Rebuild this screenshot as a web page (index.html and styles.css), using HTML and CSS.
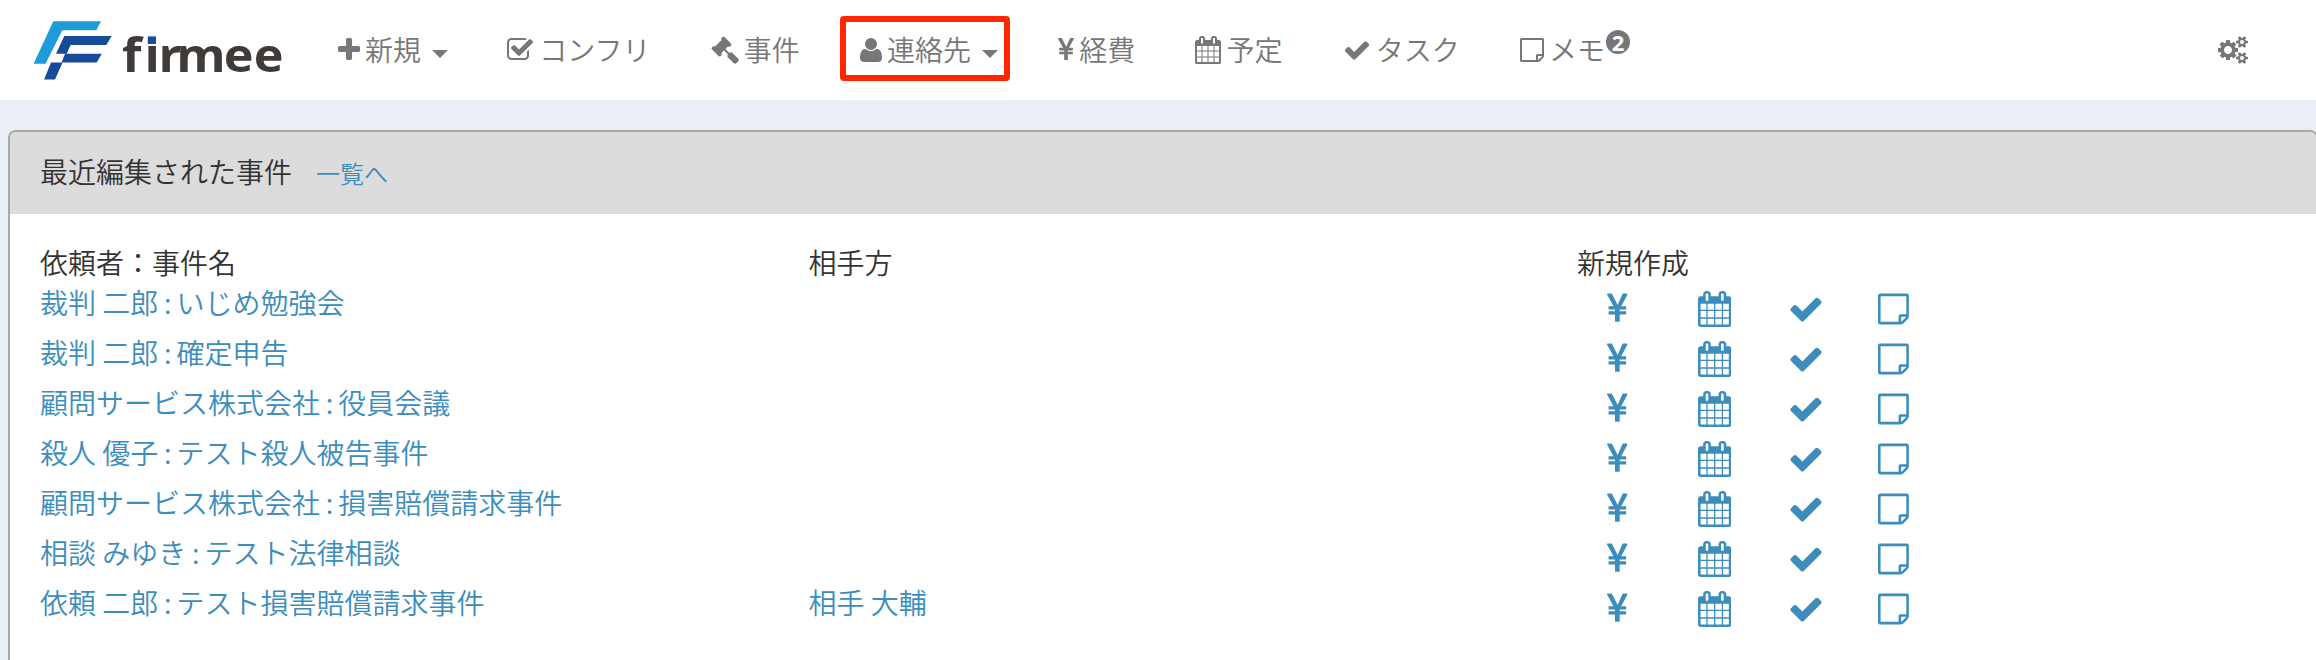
FILE: index.html
```html
<!DOCTYPE html>
<html lang="ja">
<head>
<meta charset="utf-8">
<title>firmee</title>
<link rel="stylesheet" href="styles.css">
</head>
<body>
<svg class="sprite" aria-hidden="true">
  <symbol id="plus" viewBox="192 0 1408 1792"><path d="M1600 736v192q0 40-28 68t-68 28h-416v416q0 40-28 68t-68 28h-192q-40 0-68-28t-28-68v-416h-416q-40 0-68-28t-28-68v-192q0-40 28-68t68-28h416v-416q0-40 28-68t68-28h192q40 0 68 28t28 68v416h416q40 0 68 28t28 68z"/></symbol>
  <symbol id="check-square" viewBox="64 0 1664 1792"><path d="M1472 930v318q0 119-84.5 203.5t-203.5 84.5h-832q-119 0-203.5-84.5t-84.5-203.5v-832q0-119 84.5-203.5t203.5-84.5h832q63 0 117 25 15 7 18 23 3 17-9 29l-49 49q-10 10-23 10-3 0-9-2-23-6-45-6h-832q-66 0-113 47t-47 113v832q0 66 47 113t113 47h832q66 0 113-47t47-113v-254q0-13 9-22l64-64q10-10 23-10 6 0 12 3 20 8 20 29zm231-489l-814 814q-24 24-57 24t-57-24l-430-430q-24-24-24-57t24-57l110-110q24-24 57-24t57 24l263 263 647-647q24-24 57-24t57 24l110 110q24 24 24 57t-24 57z"/></symbol>
  <symbol id="gavel" viewBox="0 0 1792 1792"><path d="M1771 1536q0 53-37 90l-107 108q-39 37-91 37-53 0-90-37l-363-364q-38-36-38-90 0-53 43-96l-256-256-126 126q-14 14-34 14t-34-14q2 2 12.5 12t12.5 13 10 11.5 10 13.5 6 13.5 5.5 16.5 1.5 18q0 38-28 68-3 3-16.5 18t-19 20.5-18.5 16.5-22 15.5-22 9-26 4.5q-40 0-68-28l-408-408q-28-28-28-68 0-13 4.5-26t9-22 15.5-22 16.5-18.5 20.5-19 18-16.5q30-28 68-28 10 0 18 1.5t16.5 5.5 13.5 6 13.5 10 11.5 10 13 12.5 12 12.5q-14-14-14-34t14-34l348-348q14-14 34-14t34 14q-2-2-12.5-12t-12.5-13-10-11.5-10-13.5-6-13.5-5.5-16.5-1.5-18q0-38 28-68 3-3 16.5-18t19-20.5 18.5-16.5 22-15.5 22-9 26-4.5q40 0 68 28l408 408q28 28 28 68 0 13-4.5 26t-9 22-15.5 22-16.5 18.5-20.5 19-18 16.5q-30 28-68 28-10 0-18-1.5t-16.5-5.5-13.5-6-13.5-10-11.5-10-13-12.5-12-12.5q14 14 14 34t-14 34l-126 126 256 256q43-43 96-43 52 0 91 37l363 363q37 39 37 91z"/></symbol>
  <symbol id="user" viewBox="192 0 1408 1792"><path d="M1600 1405q0 120-73 189.5t-194 69.5h-874q-121 0-194-69.5t-73-189.5q0-53 3.5-103.5t14-109 26.5-108.5 43-97.5 62-81 85.5-53.5 111.5-20q9 0 42 21.5t74.5 48 108 48 133.5 21.5 133.5-21.5 108-48 74.5-48 42-21.5q61 0 111.5 20t85.5 53.5 62 81 43 97.5 26.5 108.5 14 109 3.5 103.5zm-320-893q0 159-112.5 271.5t-271.5 112.5-271.5-112.5-112.5-271.5 112.5-271.5 271.5-112.5 271.5 112.5 112.5 271.5z"/></symbol>
  <symbol id="yen" viewBox="384 0 1027 1792"><path d="M985.5 1536h-172q-13 0-22.5-9t-9.5-23v-330h-288q-13 0-22.5-9t-9.5-23v-103q0-13 9.5-22.5t22.5-9.5h288v-85h-288q-13 0-22.5-9t-9.5-23v-104q0-13 9.5-22.5t22.5-9.5h214l-321-578q-8-16 0-32 10-16 28-16h194q19 0 29 18l215 425q19 38 56 125 10-24 30.5-68t27.5-61l191-420q8-19 29-19h191q17 0 27 16 9 14 1 31l-313 579h215q13 0 22.5 9.5t9.5 22.5v104q0 14-9.5 23t-22.5 9h-290v85h290q13 0 22.5 9.5t9.5 22.5v103q0 14-9.5 23t-22.5 9h-290v330q0 13-9.5 22.5t-22.5 9.5z"/></symbol>
  <symbol id="calendar" viewBox="64 0 1664 1792"><path d="M192 1664h288v-288h-288v288zm352 0h320v-288h-320v288zm-352-352h288v-320h-288v320zm352 0h320v-320h-320v320zm-352-384h288v-288h-288v288zm736 736h320v-288h-320v288zm-384-736h320v-288h-320v288zm768 736h288v-288h-288v288zm-384-352h320v-320h-320v320zm-352-864v-288q0-13-9.5-22.5t-22.5-9.5h-64q-13 0-22.5 9.5t-9.5 22.5v288q0 13 9.5 22.5t22.5 9.5h64q13 0 22.5-9.5t9.5-22.5zm736 864h288v-320h-288v320zm-384-384h320v-288h-320v288zm384 0h288v-288h-288v288zm32-480v-288q0-13-9.5-22.5t-22.5-9.5h-64q-13 0-22.5 9.5t-9.5 22.5v288q0 13 9.5 22.5t22.5 9.5h64q13 0 22.5-9.5t9.5-22.5zm384-64v1280q0 52-38 90t-90 38h-1408q-52 0-90-38t-38-90v-1280q0-52 38-90t90-38h128v-96q0-66 47-113t113-47h64q66 0 113 47t47 113v96h384v-96q0-66 47-113t113-47h64q66 0 113 47t47 113v96h128q52 0 90 38t38 90z"/></symbol>
  <symbol id="check" viewBox="0 0 1792 1792"><path d="M1671 566q0 40-28 68l-724 724-136 136q-28 28-68 28t-68-28l-136-136-362-362q-28-28-28-68t28-68l136-136q28-28 68-28t68 28l294 295 656-657q28-28 68-28t68 28l136 136q28 28 28 68z"/></symbol>
  <symbol id="note" viewBox="128 0 1536 1792"><path d="M1528 1280h-248v248q29-10 41-22l185-185q12-12 22-41zm-280-128h288v-896h-1280v1280h896v-288q0-40 28-68t68-28zm416-928v1024q0 40-20 88t-48 76l-184 184q-28 28-76 48t-88 20h-1024q-40 0-68-28t-28-68v-1344q0-40 28-68t68-28h1344q40 0 68 28t28 68z"/></symbol>
  <symbol id="cogs" viewBox="-64 0 1920 1792"><path d="M832 896q0-106-75-181t-181-75-181 75-75 181 75 181 181 75 181-75 75-181zm768 512q0-52-38-90t-90-38-90 38-38 90q0 53 37.5 90.5t90.5 37.5 90.5-37.5 37.5-90.5zm0-1024q0-52-38-90t-90-38-90 38-38 90q0 53 37.5 90.5t90.5 37.5 90.5-37.5 37.5-90.5zm-384 421v185q0 10-7 19.5t-16 10.5l-155 24q-11 35-32 76 34 48 90 115 7 11 7 20 0 12-7 19-23 30-82.5 89.5t-78.5 59.5q-11 0-21-7l-115-90q-37 19-77 31-11 108-23 155-7 24-30 24h-186q-11 0-20-7.5t-10-17.5l-23-153q-34-10-75-31l-118 89q-7 7-20 7-11 0-21-8-144-133-144-160 0-9 7-19 10-14 41-53t47-61q-23-44-35-82l-152-24q-10-1-17-9.5t-7-19.5v-185q0-10 7-19.5t16-10.5l155-24q11-35 32-76-34-48-90-115-7-11-7-20 0-12 7-20 22-30 82-89t79-59q11 0 21 7l115 90q34-18 77-32 11-108 23-154 7-24 30-24h186q11 0 20 7.5t10 17.5l23 153q34 10 75 31l118-89q8-7 20-7 11 0 21 8 144 133 144 160 0 8-7 19-12 16-42 54t-45 60q23 48 34 82l152 23q10 2 17 10.5t7 19.5zm640 533v140q0 16-149 31-12 27-30 52 51 113 51 138 0 4-4 7-122 71-124 71-8 0-46-47t-52-68q-20 2-30 2t-30-2q-14 21-52 68t-46 47q-2 0-124-71-4-3-4-7 0-25 51-138-18-25-30-52-149-15-149-31v-140q0-16 149-31 13-29 30-52-51-113-51-138 0-4 4-7 4-2 35-20t59-34 30-16q8 0 46 46.5t52 67.5q20-2 30-2t30 2q51-71 92-112l6-2q4 0 124 70 4 3 4 7 0 25-51 138 17 23 30 52 149 15 149 31zm0-1024v140q0 16-149 31-12 27-30 52 51 113 51 138 0 4-4 7-122 71-124 71-8 0-46-47t-52-68q-20 2-30 2t-30-2q-14 21-52 68t-46 47q-2 0-124-71-4-3-4-7 0-25 51-138-18-25-30-52-149-15-149-31v-140q0-16 149-31 13-29 30-52-51-113-51-138 0-4 4-7 4-2 35-20t59-34 30-16q8 0 46 46.5t52 67.5q20-2 30-2t30 2q51-71 92-112l6-2q4 0 124 70 4 3 4 7 0 25-51 138 17 23 30 52 149 15 149 31z"/></symbol>
</svg>

<header class="navbar">
  <svg class="logo" viewBox="0 0 260 70">
    <path fill="#1e9cd9" d="M23.3 6.3H71l-4.7 9H32.3L15.6 48.8H3.6z"/>
    <path fill="#184a9a" d="M34.3 21h47.4l-5.4 9.1H40.7L36.6 38.8h35.2L66.7 47.5H32.6L25 64.5H14.1L21 47.5h10.6L35 38.8H26z"/>
    <text class="wordmark" transform="scale(1.07 1)" x="86 106.9 120 136.7 181 209" y="56.7">firmee</text>
    <path fill="#fff" d="M115 17h12v13h-12z"/>
    <path fill="#184a9a" d="M117.8 21.4h8.2v7.6h-8.2z"/>
  </svg>
  <nav class="menu">
    <a class="item"><svg class="icon w22"><use href="#plus"/></svg><span>新規</span><i class="caret"></i></a>
    <a class="item"><svg class="icon w26 box"><use href="#check-square"/></svg><span>コンフリ</span></a>
    <a class="item"><svg class="icon w28"><use href="#gavel"/></svg><span>事件</span></a>
    <a class="item marked"><svg class="icon w22"><use href="#user"/></svg><span>連絡先</span><i class="caret"></i></a>
    <a class="item"><svg class="icon w16"><use href="#yen"/></svg><span>経費</span></a>
    <a class="item"><svg class="icon w26"><use href="#calendar"/></svg><span>予定</span></a>
    <a class="item"><svg class="icon w28"><use href="#check"/></svg><span>タスク</span></a>
    <a class="item"><svg class="icon w24"><use href="#note"/></svg><span>メモ</span><b class="badge">2</b></a>
  </nav>
  <a class="settings"><svg class="icon w30"><use href="#cogs"/></svg></a>
</header>

<main class="panel">
  <div class="panel-head"><h1>最近編集された事件</h1><a class="more">一覧へ</a></div>
  <div class="panel-body">
    <div class="row head"><span>依頼者：事件名</span><span>相手方</span><span>新規作成</span></div>
    <div class="row"><a>裁判 二郎<i class="sep"> : </i>いじめ勉強会</a><a></a><div class="actions"><svg class="yen"><use href="#yen"/></svg><svg class="calendar"><use href="#calendar"/></svg><svg class="check"><use href="#check"/></svg><svg class="note"><use href="#note"/></svg></div></div>
    <div class="row"><a>裁判 二郎<i class="sep"> : </i>確定申告</a><a></a><div class="actions"><svg class="yen"><use href="#yen"/></svg><svg class="calendar"><use href="#calendar"/></svg><svg class="check"><use href="#check"/></svg><svg class="note"><use href="#note"/></svg></div></div>
    <div class="row"><a>顧問サービス株式会社<i class="sep"> : </i>役員会議</a><a></a><div class="actions"><svg class="yen"><use href="#yen"/></svg><svg class="calendar"><use href="#calendar"/></svg><svg class="check"><use href="#check"/></svg><svg class="note"><use href="#note"/></svg></div></div>
    <div class="row"><a>殺人 優子<i class="sep"> : </i>テスト殺人被告事件</a><a></a><div class="actions"><svg class="yen"><use href="#yen"/></svg><svg class="calendar"><use href="#calendar"/></svg><svg class="check"><use href="#check"/></svg><svg class="note"><use href="#note"/></svg></div></div>
    <div class="row"><a>顧問サービス株式会社<i class="sep"> : </i>損害賠償請求事件</a><a></a><div class="actions"><svg class="yen"><use href="#yen"/></svg><svg class="calendar"><use href="#calendar"/></svg><svg class="check"><use href="#check"/></svg><svg class="note"><use href="#note"/></svg></div></div>
    <div class="row"><a>相談 みゆき<i class="sep"> : </i>テスト法律相談</a><a></a><div class="actions"><svg class="yen"><use href="#yen"/></svg><svg class="calendar"><use href="#calendar"/></svg><svg class="check"><use href="#check"/></svg><svg class="note"><use href="#note"/></svg></div></div>
    <div class="row"><a>依頼 二郎<i class="sep"> : </i>テスト損害賠償請求事件</a><a>相手 大輔</a><div class="actions"><svg class="yen"><use href="#yen"/></svg><svg class="calendar"><use href="#calendar"/></svg><svg class="check"><use href="#check"/></svg><svg class="note"><use href="#note"/></svg></div></div>
  </div>
</main>
</body>
</html>
```

FILE: styles.css
```css
* { box-sizing: border-box; }

body {
  margin: 0;
  height: 660px;
  overflow: hidden;
  background: #eaeef6;
  color: #333;
  font: 350 28px/40px "Noto Sans CJK JP", sans-serif;
}

svg { display: block; flex: none; fill: currentColor; }
.sprite { position: absolute; width: 0; height: 0; }

.navbar {
  display: flex;
  height: 100px;
  padding-left: 30px;
  background: #fff;
  color: #777;
}

.logo { width: 260px; height: 70px; margin-top: 15px; }
.wordmark { font: 700 47px "Open Sans", sans-serif; fill: #403a39; }

.menu { display: flex; gap: 60.25px; margin-left: 48px; height: 100px; }
.item { display: flex; align-items: center; position: relative; white-space: nowrap; }
.item span { margin: 0 0 2px 5px; }
.icon { height: 28px; }
.box { margin: 0 1px 0 -1px; }
.w16 { width: 16px; }
.w22 { width: 22px; }
.w24 { width: 24px; }
.w26 { width: 26px; }
.w28 { width: 28px; }
.w30 { width: 30px; }

.caret {
  margin: 8px 0 0 11px;
  border: 8px solid transparent;
  border-top-color: currentColor;
  border-bottom: 0;
}

.marked::after {
  content: "";
  position: absolute;
  inset: 16px -12px 19px -20px;
  border: 6px solid #ff2600;
  border-radius: 4px;
}

.badge {
  width: 24px;
  height: 24px;
  margin: 0 0 16px 1px;
  border-radius: 50%;
  background: #777;
  color: #fff;
  font: 700 22px/24px "Noto Sans", sans-serif;
  text-align: center;
}

.settings { display: flex; align-items: center; margin: 0 68px 0 auto; }

.panel {
  width: 2310px;
  height: 530px;
  margin: 30px 0 0 8px;
  border: 2px solid #a8a8a8;
  border-bottom: 0;
  border-radius: 8px 8px 0 0;
  background: #fff;
  overflow: hidden;
}

.panel-head {
  display: flex;
  align-items: center;
  gap: 24px;
  height: 82px;
  padding: 0 0 4px 30px;
  background: #dcdcdc;
}
.panel-head h1 { margin: 0; font-size: 28px; font-weight: 350; }
.more { font-size: 24px; color: #3c8dbc; padding-top: 3px; }

.panel-body { padding: 28px 0 0 30px; }
.row {
  display: grid;
  grid-template-columns: 768.5px 768.5px 1fr;
  height: 50px;
  color: #3c8dbc;
  white-space: nowrap;
}
.row.head { height: 40px; color: #333; }
.sep { font-style: normal; letter-spacing: -0.6px; }

.actions { display: flex; padding: 9px 0 0 30px; }
.actions svg { height: 36px; }
.actions .yen { width: 20.6px; }
.actions .calendar { width: 33.4px; margin-left: 70px; }
.actions .check { width: 36px; margin-left: 57px; }
.actions .note { width: 30.9px; margin-left: 54px; }
```
